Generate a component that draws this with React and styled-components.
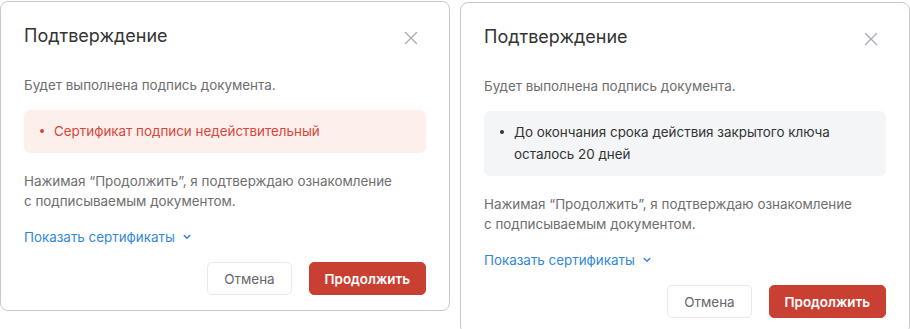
import React from 'react';
import styled, { createGlobalStyle } from 'styled-components';

const GlobalStyle = createGlobalStyle`
  html, body {
    margin: 0;
    padding: 0;
    background: #ffffff;
  }
  body {
    font-family: Inter, "Noto Sans", sans-serif;
    -webkit-font-smoothing: antialiased;
  }
`;

const Page = styled.div`
  display: flex;
  align-items: flex-start;
  gap: 10px;
  width: 910px;
  height: 329px;
  overflow: hidden;
`;

const Dialog = styled.div`
  box-sizing: border-box;
  width: 450px;
  margin-top: ${(p) => p.$offset}px;
  border: 1px solid #c8c8c8;
  border-radius: 8px;
  background: #fff;
  padding: 22px 23px 15px;
  display: flex;
  flex-direction: column;
`;

const Header = styled.div`
  display: flex;
  align-items: center;
  justify-content: space-between;
  height: 24px;
`;

const Title = styled.h2`
  margin: 0;
  font-size: 18px;
  font-weight: 400;
  color: #333;
  line-height: 24px;
`;

const Close = styled.button`
  border: 0;
  background: none;
  padding: 0;
  margin: 4px 8px 0 0;
  width: 14px;
  height: 14px;
  display: flex;
  cursor: pointer;
`;

const Text = styled.p`
  margin: ${(p) => p.$mt || 0}px 0 0;
  font-size: 13.4px;
  line-height: 20px;
  color: #6e6e6e;
`;

const Notice = styled.ul`
  margin: 15px 0 0;
  padding: 10px 16px 11px 30px;
  border-radius: 6px;
  list-style: none;
  background: ${(p) => (p.$error ? '#fdf0ec' : '#f4f5f7')};
  color: ${(p) => (p.$error ? '#d4473b' : '#333')};
  font-size: 13.4px;
  line-height: 22px;
`;

const NoticeItem = styled.li`
  position: relative;
  &::before {
    content: '';
    position: absolute;
    left: -14px;
    top: 9px;
    width: 4px;
    height: 4px;
    border-radius: 50%;
    background: currentColor;
  }
`;

const Toggle = styled.button`
  margin-top: 16px;
  align-self: flex-start;
  display: flex;
  align-items: center;
  gap: 8px;
  border: 0;
  padding: 0;
  background: none;
  font-family: inherit;
  font-size: 13.4px;
  line-height: 20px;
  color: #2f88dc;
  cursor: pointer;
`;

const Footer = styled.div`
  margin-top: 15px;
  display: flex;
  justify-content: flex-end;
  gap: 17px;
`;

const Button = styled.button`
  height: 33px;
  padding: 0 ${(p) => (p.$primary ? 15 : 16)}px;
  border-radius: 5px;
  border: 1px solid ${(p) => (p.$primary ? '#c94033' : '#e6e9ef')};
  background: ${(p) => (p.$primary ? '#c94033' : '#fff')};
  color: ${(p) => (p.$primary ? '#fff' : '#666')};
  font-family: inherit;
  font-size: 13.4px;
  font-weight: ${(p) => (p.$primary ? 600 : 400)};
  cursor: pointer;
`;

const CloseIcon = () => (
  <svg width="14" height="14" viewBox="0 0 14 14" fill="none">
    <path d="M1.5 1.5l11 11M12.5 1.5l-11 11" stroke="#a8acb3" strokeWidth="1.4" strokeLinecap="round" />
  </svg>
);

const Chevron = () => (
  <svg width="8" height="6" viewBox="0 0 8 6" fill="none">
    <path d="M1.2 1.5L4 4.3l2.8-2.8" stroke="#2f88dc" strokeWidth="1.5" strokeLinecap="round" strokeLinejoin="round" />
  </svg>
);

function ConfirmDialog({ offset, error, lines }) {
  return (
    <Dialog $offset={offset}>
      <Header>
        <Title>Подтверждение</Title>
        <Close aria-label="Закрыть"><CloseIcon /></Close>
      </Header>
      <Text $mt={27}>Будет выполнена подпись документа.</Text>
      <Notice $error={error}>
        <NoticeItem>
          {lines.map((l, i) => (
            <React.Fragment key={i}>
              {i > 0 && <br />}
              {l}
            </React.Fragment>
          ))}
        </NoticeItem>
      </Notice>
      <Text $mt={18}>
        Нажимая “Продолжить”, я подтверждаю ознакомление
        <br />
        с подписываемым документом.
      </Text>
      <Toggle>
        Показать сертификаты <Chevron />
      </Toggle>
      <Footer>
        <Button>Отмена</Button>
        <Button $primary>Продолжить</Button>
      </Footer>
    </Dialog>
  );
}

export default function App() {
  return (
    <>
      <GlobalStyle />
      <Page>
        <ConfirmDialog offset={1} error lines={['Сертификат подписи недействительный']} />
        <ConfirmDialog
          offset={2}
          lines={['До окончания срока действия закрытого ключа', 'осталось 20 дней']}
        />
      </Page>
    </>
  );
}
